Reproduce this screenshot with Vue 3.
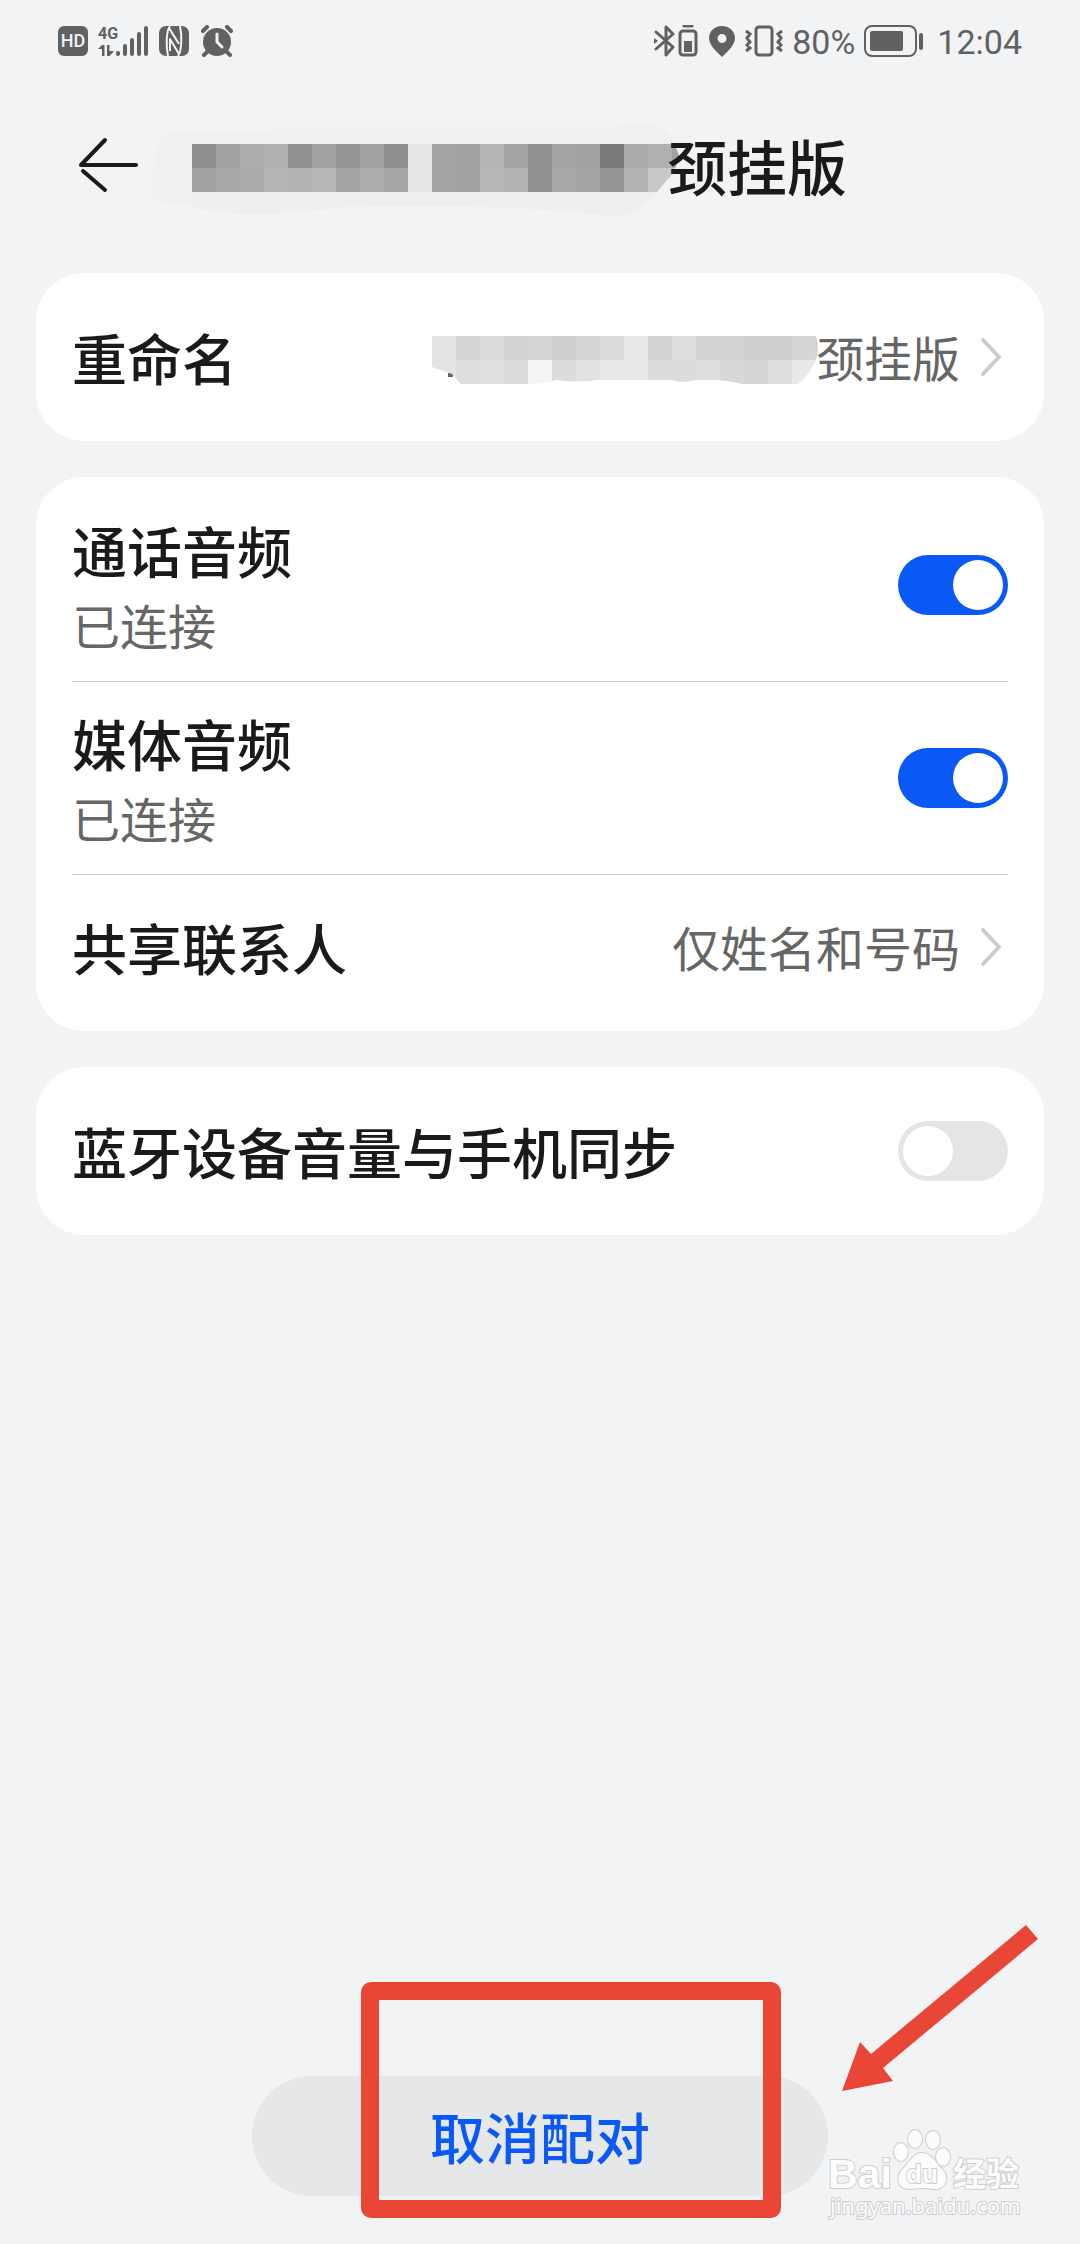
<template>
  <div class="page">
    <div class="status-bar">
      <div class="status-group">
        <svg class="icon" width="30" height="32" viewBox="0 0 30 32">
          <rect y="1" width="30" height="30" rx="6" fill="#5f6163" />
          <text x="15" y="22" class="hd-text">HD</text>
        </svg>
        <svg class="icon" width="50" height="32" viewBox="0 0 50 32">
          <text x="0" y="14" class="net-text">4G</text>
          <g fill="#5f6163">
            <path d="M4 20h2.500v11H4v-7H0zM9 20h2.500v6H16l-4.500 5H9z" />
            <rect x="18" y="26" width="4" height="5" rx="2" />
            <rect x="25" y="19" width="4" height="12" rx="2" />
            <rect x="32" y="13" width="4" height="18" rx="2" />
            <rect x="39" y="7" width="4" height="24" rx="2" />
            <rect x="46" y="1" width="4" height="30" rx="2" />
          </g>
        </svg>
        <svg class="icon" width="32" height="32" viewBox="0 0 32 32">
          <rect x="1" y="1" width="30" height="30" rx="7" fill="#5f6163" />
          <g fill="none" stroke="#f1f3f5" stroke-width="2" stroke-linejoin="round">
            <path d="M12 1C8 6 8 22 10 31" />
            <path d="M20 31C24 26 24 10 22 1" />
            <path d="M11 3l10 16" />
            <path d="M21 29L12 14v12" />
          </g>
        </svg>
        <svg class="icon" width="34" height="32" viewBox="0 0 34 32">
          <circle cx="17" cy="17" r="14" fill="#5f6163" />
          <g fill="none" stroke="#5f6163" stroke-width="4" stroke-linecap="round">
            <path d="M3 6l4-4M31 6l-4-4M7 27l-3 3M27 27l3 3" />
          </g>
          <path d="M17 9v8l5 5" fill="none" stroke="#f1f3f5" stroke-width="3" stroke-linecap="round" />
        </svg>
      </div>
      <div class="status-group tight">
        <svg class="icon" width="46" height="32" viewBox="0 0 46 32" fill="none" stroke="#5f6163" stroke-width="3">
          <path d="M3 7l17 15-7 8V2l7 7L3 24" stroke-linejoin="round" stroke-linecap="round" />
          <path d="M1 13l4 3-4 3z" fill="#5f6163" stroke="none" />
          <path d="M31 1h8" stroke-linecap="round" />
          <rect x="27" y="6" width="16" height="24" rx="3" />
          <rect x="31" y="16" width="8" height="11" fill="#5f6163" stroke="none" />
        </svg>
        <svg class="icon" width="28" height="32" viewBox="0 0 28 32">
          <path
            fill="#5f6163"
            fill-rule="evenodd"
            d="M14 1C6 1 1 7 1 13c0 7 7 13 13 19 6-6 13-12 13-19 0-6-5-12-13-12zm0 8a4 4 0 0 1 0 9 4 4 0 0 1 0-9z"
          />
        </svg>
        <svg class="icon" width="38" height="32" viewBox="0 0 38 32" fill="none" stroke="#5f6163" stroke-width="3">
          <rect x="11" y="2" width="16" height="28" rx="3" />
          <path d="M1 6l4 3-3 4 3 4-3 3 3 3-4 3M37 6l-4 3 3 4-3 4 3 3-3 3 4 3" />
        </svg>
        <span class="status-text">80%</span>
        <svg class="icon" width="60" height="32" viewBox="0 0 60 32">
          <rect x="1" y="1" width="51" height="30" rx="7" fill="none" stroke="#5f6163" stroke-width="2" />
          <rect x="6" y="6" width="33" height="20" rx="2" fill="#5f6163" />
          <rect x="55" y="8" width="4" height="17" rx="2" fill="#5f6163" />
        </svg>
        <span class="status-text clock">12:04</span>
      </div>
    </div>

    <header class="header">
      <button class="back" type="button" aria-label="返回">
        <svg width="72" height="72" viewBox="0 0 72 72" fill="none" stroke="#1a1a1a" stroke-width="4">
          <path d="M64 33H9l24-25" stroke-linecap="round" stroke-linejoin="round" />
          <path d="M11 39l22 19" stroke-linecap="round" />
        </svg>
      </button>
      <svg class="title-mask" width="487" height="96" viewBox="0 0 487 96">
        <defs>
          <clipPath id="titleClip">
            <path d="M0 24H483L487 36Q483 54 475 60L465 72H0z" />
          </clipPath>
        </defs>
        <path d="M-40 72Q-40 24 -24 12Q200 6 420 8Q470 -8 483 24L475 60Q448 96 420 96Q300 82 150 87Q60 102 0 86Q-40 84 -40 72z" fill="#eff0f2" />
        <path d="M0 72V88Q60 100 150 87Q300 82 420 96Q448 96 465 72z" fill="#edeef0" />
        <g clip-path="url(#titleClip)">
          <rect
            v-for="cell in titleCells"
            :key="cell.id"
            :x="cell.x"
            :y="cell.y + 24"
            width="24"
            height="24"
            :fill="cell.fill"
            shape-rendering="crispEdges"
          />
        </g>
      </svg>
      <h1>颈挂版</h1>
    </header>

    <main class="cards">
      <section class="card">
        <button class="row" type="button">
          <span class="label">重命名</span>
          <span class="value">
            <svg class="name-mask" width="386" height="48" viewBox="0 0 386 48">
              <defs>
                <clipPath id="nameClip">
                  <path
                    d="M0 0H384Q388 14 383 26Q378 38 366 48H310Q290 43 262 44Q250 48 240 44H166Q145 47 124 44Q112 48 98 48H29L20 38L0 31z"
                  />
                </clipPath>
              </defs>
              <rect x="16" y="37" width="5" height="4" fill="#666" />
              <g clip-path="url(#nameClip)">
                <rect
                  v-for="cell in nameCells"
                  :key="cell.id"
                  :x="cell.x"
                  :y="cell.y"
                  width="24"
                  height="24"
                  :fill="cell.fill"
                  shape-rendering="crispEdges"
                />
              </g>
            </svg>
            颈挂版
          </span>
          <svg class="chevron" width="48" height="48" viewBox="0 0 48 48">
            <path d="M23 7l16 17-16 17" />
          </svg>
        </button>
      </section>

      <section class="card">
        <label v-for="item in audio" :key="item.label" class="row tall">
          <span class="texts">
            <span class="label">{{ item.label }}</span>
            <span class="sub">已连接</span>
          </span>
          <input v-model="item.on" class="switch" type="checkbox" role="switch" />
        </label>
        <button class="row" type="button">
          <span class="label">共享联系人</span>
          <span class="value">仅姓名和号码</span>
          <svg class="chevron" width="48" height="48" viewBox="0 0 48 48">
            <path d="M23 7l16 17-16 17" />
          </svg>
        </button>
      </section>

      <section class="card">
        <label class="row">
          <span class="label">蓝牙设备音量与手机同步</span>
          <input v-model="syncVolume" class="switch" type="checkbox" role="switch" />
        </label>
      </section>
    </main>

    <footer class="footer">
      <button class="unpair" type="button">取消配对</button>
      <div class="frame"></div>
      <svg class="arrow" width="200" height="170" viewBox="0 0 200 170">
        <path d="M2 168L20 119 31 131 186 2 198 16 43 145 53 158z" fill="#e94638" />
      </svg>
      <svg class="watermark" width="210" height="110" viewBox="0 0 210 110">
        <g class="outlined">
          <text x="1" y="60" class="wm-latin">Bai</text>
          <ellipse cx="74" cy="24" rx="7" ry="9" />
          <ellipse cx="88" cy="11" rx="7" ry="9" />
          <ellipse cx="106" cy="12" rx="7" ry="9" />
          <ellipse cx="116" cy="29" rx="7" ry="9" />
          <path d="M95 25c9 0 13 9 19 15 10 9 4 22-6 21-6 0-8-1-13-1s-8 1-13 1c-11 0-14-12-6-20 6-6 10-16 19-16z" />
          <text x="79" y="55" class="wm-du">du</text>
          <text x="126" y="58" class="wm-cn">经验</text>
          <text x="3" y="86" class="wm-url">jingyan.baidu.com</text>
        </g>
      </svg>
    </footer>
  </div>
</template>

<script setup>
import { ref } from 'vue'

const audio = ref([
  { label: '通话音频', on: true },
  { label: '媒体音频', on: true },
])
const syncVolume = ref(false)

// each row is a list of grey levels, one per 24px block
const toCells = (rows) =>
  rows.flatMap((row, r) =>
    row.split(' ').map((level, c) => ({
      id: `${r}-${c}`,
      x: c * 24,
      y: r * 24,
      fill: `#${level}${level}${level}`,
    })),
  )

const titleCells = toCells([
  '8f a3 ac b0 91 a3 96 a3 8e e6 a5 a3 b5 a5 92 a5 a3 7a ab b0 a0',
  'a2 a9 ab b6 b4 b8 a4 ac a7 e6 a5 a3 b8 b2 92 a8 a4 96 b4 c8 c8',
])
const nameCells = toCells([
  'e3 d4 dc d2 d4 cf d4 db e8 d3 dd d2 d2 cf cf d6 cc',
  'e4 dd e0 db f4 dc e2 e8 e8 dc dc de d8 d6 dd e9 e9',
])
</script>

<style>
body {
  margin: 0;
  background: #f1f3f5;
}
</style>

<style scoped>
.page {
  min-height: 100vh;
  display: flex;
  flex-direction: column;
  background: #f1f3f5;
  color: #1a1a1a;
  font-family: 'Noto Sans CJK SC', sans-serif;
}
button {
  border: 0;
  padding: 0;
  background: none;
  color: inherit;
  font: inherit;
  cursor: pointer;
}
.status-bar {
  height: 82px;
  padding: 0 58px;
  display: flex;
  align-items: center;
  justify-content: space-between;
}
.status-group {
  display: flex;
  align-items: center;
  gap: 10px;
}
.tight {
  gap: 9px;
}
.icon {
  display: block;
}
.status-text {
  padding-top: 2px;
  font-family: Roboto, sans-serif;
  font-size: 34px;
  font-weight: 400;
  line-height: 40px;
  color: #5f6163;
}
.clock {
  margin-left: 4px;
}
.hd-text {
  font-family: Roboto, sans-serif;
  font-size: 18px;
  font-weight: 500;
  fill: #f1f3f5;
  text-anchor: middle;
}
.net-text {
  font-family: Roboto, sans-serif;
  font-size: 16px;
  font-weight: 700;
  fill: #5f6163;
}
.header {
  height: 144px;
  margin-top: 14px;
  padding: 0 72px;
  display: flex;
  align-items: center;
}
.back {
  width: 72px;
  height: 72px;
  margin-right: 48px;
}
.back svg {
  display: block;
}
.title-mask {
  display: block;
  overflow: visible;
  margin-right: -12px;
}
h1 {
  margin: 0;
  padding-bottom: 6px;
  font-size: 60px;
  font-weight: 500;
  line-height: 84px;
}
.cards {
  margin: 33px 36px 48px;
  display: flex;
  flex-direction: column;
  gap: 36px;
}
.card {
  padding: 12px 36px;
  border-radius: 48px;
  background: #fff;
}
.row {
  width: 100%;
  min-height: 144px;
  display: flex;
  align-items: center;
  text-align: left;
}
.tall {
  min-height: 192px;
  border-bottom: 1px solid #c8c9cb;
}
.texts {
  display: flex;
  flex-direction: column;
  padding-bottom: 2px;
}
.label {
  padding-bottom: 2px;
  font-size: 55px;
  font-weight: 500;
  line-height: 78px;
}
.sub {
  font-size: 48px;
  line-height: 68px;
  color: #666;
}
.value {
  margin-left: auto;
  padding-bottom: 2px;
  display: flex;
  align-items: center;
  font-size: 48px;
  line-height: 68px;
  color: #666;
}
.name-mask {
  margin-top: 8px;
  margin-right: -2px;
}
.chevron {
  flex: none;
  fill: none;
  stroke: #ccc;
  stroke-width: 4;
  stroke-linecap: round;
  stroke-linejoin: round;
}
.switch {
  appearance: none;
  flex: none;
  width: 110px;
  height: 60px;
  margin: 0 0 0 auto;
  padding: 5px;
  box-sizing: border-box;
  display: flex;
  border-radius: 30px;
  background: #e5e5e5;
  cursor: pointer;
}
.switch::before {
  content: '';
  width: 50px;
  height: 50px;
  border-radius: 50%;
  background: #fff;
}
.switch:checked {
  justify-content: flex-end;
  background: #0a59f7;
}
.footer {
  position: relative;
  margin-top: auto;
  padding-bottom: 48px;
  display: flex;
  justify-content: center;
}
.unpair {
  width: 576px;
  height: 120px;
  padding-bottom: 2px;
  border-radius: 60px;
  background: #e5e7e9;
  color: #0a59f7;
  font-size: 55px;
  font-weight: 500;
}
.frame {
  position: absolute;
  left: calc(50% - 179px);
  bottom: 26px;
  width: 420px;
  height: 236px;
  box-sizing: border-box;
  border: 18px solid #e94638;
  border-radius: 10px;
}
.arrow {
  position: absolute;
  right: 40px;
  bottom: 151px;
}
.watermark {
  position: absolute;
  right: 43px;
  bottom: 6px;
}
.outlined {
  fill: #fcfcfc;
  stroke: #cdcecf;
  stroke-width: 2;
  paint-order: stroke;
}
.wm-latin {
  font: 700 41px 'Liberation Sans', sans-serif;
}
.wm-du {
  font: 700 26px 'Liberation Sans', sans-serif;
}
.wm-cn {
  font: 700 33px 'Noto Sans CJK SC', sans-serif;
}
.wm-url {
  font: 400 22px 'Noto Sans', sans-serif;
}
</style>
